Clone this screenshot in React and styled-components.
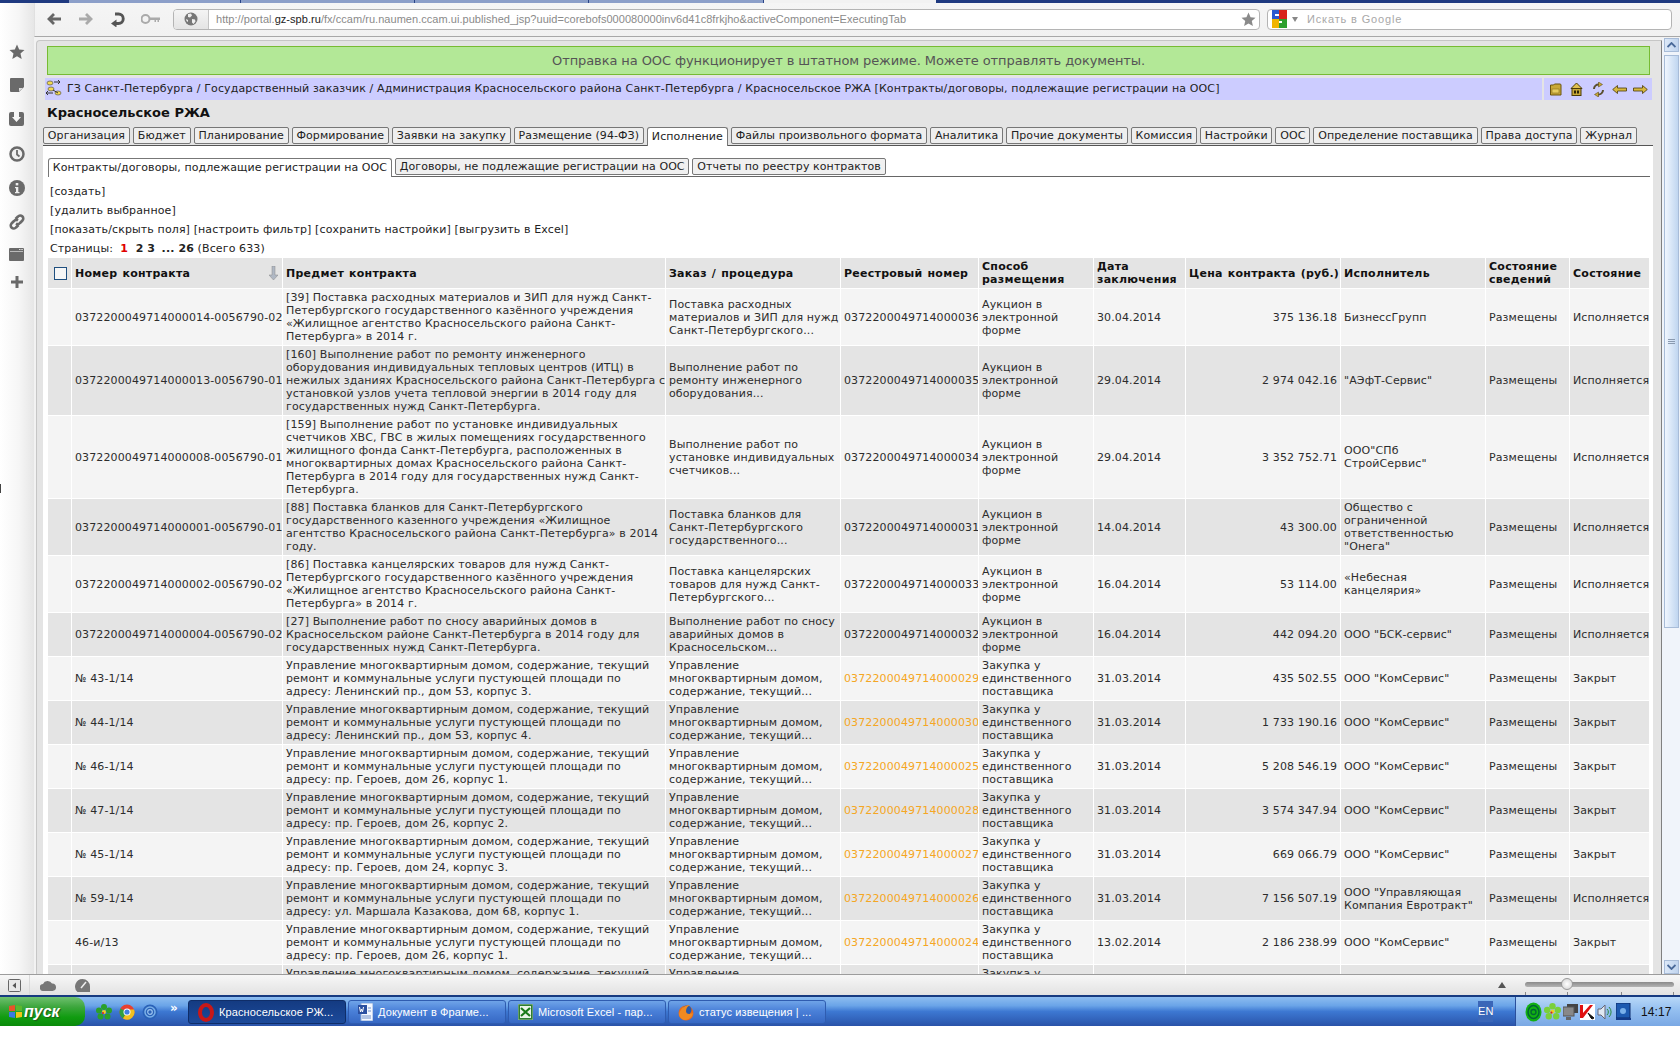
import React from "react";
import styled, { createGlobalStyle } from "styled-components";

const Global = createGlobalStyle`
  html, body { margin: 0; padding: 0; background: #fff; overflow: hidden; }
  body { font-family: "DejaVu Sans", Verdana, sans-serif; font-size: 11px; color: #222; letter-spacing: 0.12px; }
  * { box-sizing: border-box; }
`;

const Screen = styled.div`
  width: 1680px; height: 1026px; display: flex; flex-direction: column; position: relative; overflow: hidden;
`;
const TabStrip = styled.div`display: flex; height: 3px; flex: none; background: #f2f2f2;`;
const StripSeg = styled.div`
  width: ${p => p.$w}px; flex: ${p => (p.$grow ? 1 : "none")};
  background: ${p => p.$c}; border-right: ${p => (p.$sep ? "1px solid #2a4488" : "none")};
`;
const Middle = styled.div`display: flex; flex: 1; min-height: 0;`;
const Sidebar = styled.div`
  width: 34px; flex: none; display: flex; flex-direction: column; align-items: center; padding-top: 40px; padding-right: 1px;
  background: linear-gradient(90deg, #ffffff 0%, #f6f6f6 55%, #e6e6e6 100%);
  position: relative;
`;
const SideMark = styled.div`position: absolute; left: 0; top: 481px; width: 1px; height: 9px; background: #444;`;
const SideIcon = styled.div`height: ${p => p.$h || 34}px; width: 20px; display: flex; justify-content: center; padding-top: 1px; color: #6a6a6a;`;
const Main = styled.div`flex: 1; min-width: 0; display: flex; flex-direction: column;`;
const Toolbar = styled.div`
  height: 34px; flex: none; display: flex; align-items: center; padding: 0 8px 1px 3px;
  background: linear-gradient(#f5f5f5, #f1f1f1); border-bottom: 1px solid #a8a8a8; border-left: 1px solid #e0e0e0;
`;
const NavBtn = styled.div`width: 32px; height: 20px; display: flex; align-items: center; justify-content: center; flex: none;`;
const AddressBar = styled.div`
  flex: 1; min-width: 0; height: 21px; margin-left: 7px; display: flex; align-items: center; background: #fff;
  border: 1px solid #b4b4b4; border-radius: 4px; overflow: hidden;
`;
const Globe = styled.div`
  width: 35px; flex: none; height: 100%; display: flex; align-items: center; justify-content: center;
  background: linear-gradient(#f4f4f4, #e4e4e4); border-right: 1px solid #c4c4c4;
`;
const Url = styled.div`
  flex: 1; padding-left: 7px; font: 11px "Liberation Sans", Arial, sans-serif; letter-spacing: 0.04px; color: #8a8a8a; white-space: nowrap; overflow: hidden;
  b { font-weight: normal; color: #222; }
`;
const StarBox = styled.div`width: 22px; flex: none; display: flex; justify-content: center;`;
const SearchBar = styled.div`
  width: 405px; flex: none; height: 21px; margin-left: 7px; display: flex; align-items: center; gap: 5px; padding-left: 4px; background: #fff;
  border: 1px solid #b4b4b4; border-radius: 4px;
`;
const Caret = styled.div`width: 0; height: 0; border: 3.5px solid transparent; border-top: 5px solid #888; border-bottom: 0;`;
const Placeholder = styled.div`font: 11px "Liberation Sans", Arial, sans-serif; letter-spacing: 0.85px; color: #a8a8a8; margin-left: 4px;`;
const Content = styled.div`flex: 1; min-height: 0; display: flex; padding: 3px 0 0 2px; background: #f2f2f2;`;
const Frame = styled.div`
  flex: 1; min-width: 0; overflow: hidden; background: #e4e4e4; padding-top: 5px;
  border: 1px solid #c6c6c6; border-right-color: #808080; border-bottom: 0; border-top-left-radius: 4px;
`;
const Banner = styled.div`
  height: 29px; margin: 0 11px 3px 10px; display: flex; align-items: center; justify-content: center;
  background: #b3e897; border: 1px solid #77bb33; color: #555; font-size: 13px; letter-spacing: -0.09px;
`;
const Crumbs = styled.div`height: 22px; margin: 0 9px 0 8px; display: flex; gap: 2px;`;
const CrumbText = styled.div`
  flex: 1; background: #ccccff; display: flex; align-items: center; gap: 4px; font-size: 11px; color: #222; white-space: nowrap; padding-bottom: 2px;
`;
const CrumbTools = styled.div`width: 108px; flex: none; background: #ccccff; display: flex; align-items: center; justify-content: space-between; padding: 0 4px 0 4px;`;
const Title = styled.div`height: 27px; line-height: 26px; margin-left: 10px; font-size: 13px; font-weight: bold; color: #111; letter-spacing: 0;`;
const TabRow = styled.div`height: 18px; margin-left: 6px; display: flex; gap: 3px; align-items: flex-start; position: relative; z-index: 1;`;
const Tab = styled.div`
  height: ${p => (p.$active ? 19 : 17)}px; padding: 0 3.85px; line-height: ${p => (p.$active ? 18 : 15)}px; white-space: nowrap; font-size: 11px; color: #222; letter-spacing: 0.08px;
  border: 1px solid #777; border-bottom: ${p => (p.$active ? "0" : "1px solid #777")}; background: ${p => (p.$active ? "#fff" : "#eeeeee")};
  border-radius: ${p => (p.$active ? "3px 3px 0 0" : "2px")};
`;
const Panel = styled.div`margin: 0 8px 0 6px; background: #fff; border-top: 1px solid #555; padding: 12px 3px 0 5px; height: 900px;`;
const SubRow = styled.div`height: 19px; display: flex; gap: 3px; align-items: flex-start; border-bottom: 1px solid #666;`;
const SubTab = styled(Tab)`
  height: ${p => (p.$active ? 19 : 17)}px; background: ${p => (p.$active ? "#fff" : "#f0f0f0")};
`;
const Links = styled.div`padding-top: 5px;`;
const LinkLine = styled.div`height: 19px; line-height: 19px; padding-left: 2px; color: #222; white-space: nowrap;`;
const Pager = styled.b`color: ${p => p.$c || "#222"}; margin-right: ${p => p.$m || 0}px;`;

const Table = styled.table`width: 1602px; table-layout: fixed; border-collapse: separate; border-spacing: 0;`;
const Th = styled.th`
  height: 31px; background: #e4e4e4; border-right: 1px solid #fff; border-bottom: 1px solid #fff; text-align: left; font-size: 11px; line-height: 13px; padding: 1px 3px; color: #111; position: relative;
  letter-spacing: 0.25px; word-spacing: 1px; white-space: nowrap;
`;
const Row = styled.tr`background: ${p => (p.$even ? "#e4e4e4" : "#f4f4f4")};`;
const Td = styled.td`
  border-right: 1px solid #fff; border-bottom: 1px solid #fff; padding: 2px 3px; line-height: 13px; vertical-align: middle; white-space: nowrap; overflow: hidden;
  text-align: ${p => (p.$right ? "right" : "left")};
  color: ${p => p.$c || "#2c2c2c"};
`;
const Check = styled.span`display: block; width: 13px; height: 13px; margin-left: 3px; background: #f6f6f6; border: 1px solid #1f4f7f;`;
const SortArrow = styled.span`position: absolute; right: 4px; top: 8px; color: #999; display: flex;`;

const Scrollbar = styled.div`width: 18px; flex: none; display: flex; flex-direction: column; margin-top: -2px; padding: 0 1px 0 2px; background: #f0f4fa;`;
const ScrollBtn = styled.div`
  height: 14px; flex: none; display: flex; align-items: center; justify-content: center; color: #4a6a9a;
  background: linear-gradient(90deg, #dce8f8, #c0d4ee); border: 1px solid #a8bcd8; font-size: 9px;
`;
const Thumb = styled.div`
  height: 573px; flex: none; margin-top: 3px; display: flex; align-items: center; justify-content: center;
  background: linear-gradient(90deg, #f0f6fe, #c0d6f0); border: 1px solid #a8bcd8;
`;
const Grip = styled.div`width: 7px; height: 5px; border-top: 1px solid #8a9ab0; border-bottom: 1px solid #8a9ab0; position: relative; &:after { content: ""; position: absolute; left: 0; right: 0; top: 1px; height: 1px; background: #8a9ab0; }`;
const ScrollGap = styled.div`flex: 1;`;

const BottomBar = styled.div`
  height: 21px; flex: none; display: flex; align-items: center; padding-left: 0; border-top: 1px solid #9c9c9c;
  background: linear-gradient(#f7f7f7, #e2e2e2); border-bottom: 0; color: #666;
`;
const BarBtn = styled.div`width: ${p => p.$w}px; flex: none; height: 100%; display: flex; align-items: center; justify-content: center; border-right: ${p => (p.$sep ? "1px solid #dadada" : "0")};`;
const BarSpacer = styled.div`flex: 1;`;
const Tri = styled.div`width: 0; height: 0; border: 4px solid transparent; border-bottom: 6px solid #555; border-top: 0; margin-right: 19px;`;
const Slider = styled.div`width: 149px; height: 21px; margin-right: 6px; position: relative; flex: none;`;
const SliderTrack = styled.div`position: absolute; left: 0; right: 0; top: 7px; height: 5px; border-radius: 3px; background: linear-gradient(#8a8a8a, #b4b4b4);`;
const Knob = styled.div`position: absolute; left: 36px; top: 3px; width: 12px; height: 12px; border-radius: 50%; background: radial-gradient(#fff, #d0d0d0); border: 1px solid #999;`;
const Tick = styled.div`position: absolute; left: ${p => p.$x}px; bottom: 1px; width: 1px; height: 3px; background: #888;`;

const Taskbar = styled.div`
  height: 31px; flex: none; display: flex; align-items: stretch; border-top: 2px solid #163a80;
  background: linear-gradient(#8dbdf0 0%, #6aa4e8 30%, #3d78d2 50%, #2f5fb6 85%, #2a52a8 100%);
`;
const Start = styled.div`
  width: 85px; flex: none; display: flex; align-items: center; gap: 1px; padding-left: 8px;
  background: linear-gradient(#6fc06f 0%, #3ca63c 35%, #109c10 70%, #0a8a0a 100%); border-radius: 0 10px 10px 0;
  color: #fff; font: italic bold 16px "Liberation Sans", Arial, sans-serif; letter-spacing: 0; text-shadow: 1px 1px 1px #1a5a1a;
`;
const Quick = styled.div`width: 103px; flex: none; display: flex; align-items: center; padding-left: 11px; gap: 7px; color: #fff; font-size: 11px;`;
const QuickMore = styled.span`margin: -8px 0 0 5px; font-weight: bold; font-size: 12px;`;
const Buttons = styled.div`display: flex; gap: 2px; align-items: center;`;
const TaskBtn = styled.div`
  width: 158px; height: 24px; display: flex; align-items: center; gap: 5px; padding-left: 9px; margin-top: 1px; border-radius: 3px;
  color: #fff; font: 11px "Liberation Sans", Arial, sans-serif; letter-spacing: 0.12px; white-space: nowrap;
  background: ${p => (p.$active ? "linear-gradient(#143b82, #1c4a9a)" : "linear-gradient(#6fa4e8, #4a80d8 45%, #3668c4)")};
  border: 1px solid ${p => (p.$active ? "#0f2d68" : "#2f5cb0")};
`;
const TaskSpacer = styled.div`flex: 1;`;
const Lang = styled.div`width: 15px; height: 21px; align-self: center; margin-right: 22px; background: #3a66b8; color: #fff; font: 11px "Liberation Sans", Arial, sans-serif; text-align: center; line-height: 21px;`;
const Tray = styled.div`
  width: 165px; flex: none; display: flex; align-items: center; gap: 2px; padding-left: 9px; color: #111; border-left: 1px solid #2a4f9c;
  background: linear-gradient(#b8d8f8, #94bff0 45%, #7aa8e4);
`;
const Clock = styled.div`margin-left: 8px; font: 12px "Liberation Sans", Arial, sans-serif; color: #111;`;
const Blank = styled.div`height: 24px; background: #fff;`;

/* icons */
const StarIcon = ({ s = 16, c = "#6a6a6a" }) => <svg width={s} height={s} viewBox="0 0 16 16"><path fill={c} d="M8 .5l2.2 5 5.3.5-4 3.6 1.2 5.4L8 12.2 3.3 15l1.2-5.4-4-3.6 5.3-.5z" /></svg>;
const NoteIcon = () => <svg width="15" height="14" viewBox="0 0 15 14"><path fill="#6a6a6a" d="M2 0h12a1 1 0 011 1v8l-5 5H2a1 1 0 01-1-1V1a1 1 0 011-1z" /><path fill="#ddd" d="M10 10h4l-4 3.5z" /></svg>;
const SaveIcon = () => <svg width="15" height="14" viewBox="0 0 15 14"><path fill="#6a6a6a" d="M2 0h3v5H3l4.500 5L12 5h-2V0h3a2 2 0 012 2v10a2 2 0 01-2 2H2a2 2 0 01-2-2V2a2 2 0 012-2z" /></svg>;
const ClockIcon = () => <svg width="16" height="16" viewBox="0 0 16 16"><circle cx="8" cy="8" r="6.500" fill="#f0f0f0" stroke="#6a6a6a" strokeWidth="2.500" /><path d="M8 4v4.500l2.500 2" fill="none" stroke="#6a6a6a" strokeWidth="1.800" /></svg>;
const InfoIcon = () => <svg width="16" height="16" viewBox="0 0 16 16"><circle cx="8" cy="8" r="8" fill="#6a6a6a" /><rect x="6.700" y="3" width="2.600" height="2.400" fill="#eee" /><path d="M6 7h3.300v5H10.500v1.200H6V12h1V8.200H6z" fill="#eee" /></svg>;
const LinkIcon = () => <svg width="16" height="16" viewBox="0 0 16 16" fill="none" stroke="#6a6a6a" strokeWidth="2.600"><path d="M6.500 5l2.500-2.500a3 3 0 014.500 4L11 9a3 3 0 01-4 .5" /><path d="M9.500 11L7 13.500a3 3 0 01-4.500-4L5 7a3 3 0 014-.5" /></svg>;
const WinIcon = () => <svg width="15" height="13" viewBox="0 0 15 13"><rect width="15" height="13" rx="1" fill="#6a6a6a" /><rect x="1" y="3" width="13" height=".7" fill="#ddd" /><rect x="10" y="1" width="1.500" height="1" fill="#ddd" /><rect x="12.300" y="1" width="1.500" height="1" fill="#ddd" /></svg>;
const PlusIcon = () => <svg width="12" height="12" viewBox="0 0 12 12"><path fill="#6a6a6a" d="M4.500 0h3v4.500H12v3H7.500V12h-3V7.500H0v-3h4.500z" /></svg>;
const NavArrow = ({ c, flip }) => <svg width="14" height="14" viewBox="0 0 14 14" style={flip ? { transform: "scaleX(-1)" } : undefined}><path d="M7 2L2 7l5 5M2.500 7H14" fill="none" stroke={c} strokeWidth="2.800" /></svg>;
const Reload = () => <svg width="15" height="16" viewBox="0 0 15 16" fill="none"><path d="M4 3h3.500a4.500 4.500 0 110 9.500H4" stroke="#555" strokeWidth="2.900" /><path d="M5.500 8.500v8L0 12.500z" fill="#555" /></svg>;
const Key = () => <svg width="19" height="10" viewBox="0 0 19 10"><circle cx="4.500" cy="5" r="4" fill="none" stroke="#aaa" strokeWidth="2" /><path fill="#aaa" d="M8 3.500h11v2.500h-1v2h-1.500V6H15v2h-1.500V6H8z" /></svg>;
const GlobeIcon = () => <svg width="14" height="14" viewBox="0 0 14 14"><circle cx="7" cy="7" r="6.500" fill="#777" /><path fill="#eee" d="M4 2l3-.5 1 2-2 2-2-.5zM8 7l3 .5 .5 2-2 2.500-1.500-1.500zM2 7l2 1v2L2.500 9z" /></svg>;
const GoogleG = () => <svg width="15" height="18" viewBox="0 0 15 18"><rect width="7" height="9" fill="#2a5ad0" /><rect x="7" width="8" height="9" fill="#d8241c" /><rect y="9" width="7" height="9" fill="#f0b400" /><rect x="7" y="9" width="8" height="9" fill="#2ea02e" /><path fill="#fff" d="M3 4h4v2H3zM7 11h3v2H7z" /></svg>;

const Gold = ({ children }) => <svg width="15" height="15" viewBox="0 0 15 15">{children}</svg>;
const FolderG = () => <Gold><path fill="#c8a838" stroke="#6a5410" d="M2.500 3h3l1-1h5.500a1 1 0 011 1v10h-10.500z" /><rect x="4" y="7" width="7" height="4" fill="#e6cc60" stroke="#8a7020" strokeWidth=".6" /></Gold>;
const HomeG = () => <Gold><path fill="#e0c050" stroke="#4a3a08" d="M7.500 1L13 6.500H2z" /><rect x="3" y="6.500" width="9" height="7" fill="#c8a838" stroke="#4a3a08" /><rect x="5" y="8.500" width="2" height="3" fill="#2a2208" /><rect x="8" y="8.500" width="2" height="3" fill="#2a2208" /></Gold>;
const SyncG = () => <Gold><path fill="none" stroke="#5a5030" strokeWidth="2" d="M3 7A4.500 4.500 0 018 2.500M12 8A4.500 4.500 0 017 12.500" /><path fill="#c8a838" stroke="#4a3a08" strokeWidth=".5" d="M7.500 0l4 2.500-4 2.500zM7.500 10l-4 2.500 4 2.500z" /></Gold>;
const ArrowG = ({ flip }) => <svg width="15" height="9" viewBox="0 0 15 9" style={flip ? { transform: "scaleX(-1)" } : undefined}><path d="M5.500 .5L.7 4.500l4.800 4V6H14.500V3H5.500z" fill="#d8b840" stroke="#4a3a08" strokeWidth=".8" /></svg>;
const TreeG = () => <svg width="18" height="18" viewBox="0 0 18 18"><ellipse cx="5" cy="4" rx="3" ry="2" fill="#f0d850" stroke="#555" strokeWidth=".7" /><ellipse cx="6" cy="10" rx="3" ry="2" fill="#f0d850" stroke="#555" strokeWidth=".7" /><ellipse cx="13" cy="14" rx="3" ry="2" fill="#f0d850" stroke="#555" strokeWidth=".7" /><path stroke="#333" fill="none" d="M9 3h6M13 1l2 2-2 2M8 11l5 3M1 14h7M3 12l-2 2 2 2" /></svg>;

const Clover = ({ s = 16, c = "#22a022" }) => <svg width={s} height={s} viewBox="0 0 16 16"><g fill={c}><circle cx="8" cy="3" r="3" /><circle cx="3" cy="6.500" r="3" /><circle cx="13" cy="6.500" r="3" /><circle cx="4.500" cy="12.500" r="3" /><circle cx="11.500" cy="12.500" r="3" /></g><circle cx="8" cy="8" r="2" fill="#f0d020" /><circle cx="7" cy="9" r="1" fill="#d02020" /></svg>;
const Chrome = () => <svg width="16" height="16" viewBox="0 0 16 16"><circle cx="8" cy="8" r="7.500" fill="#e84030" /><path d="M8 8L1.500 4.500A7.500 7.500 0 004 14.500z" fill="#30a040" /><path d="M8 8l-4 6.500A7.500 7.500 0 0015 5.500H8z" fill="#f0c020" /><circle cx="8" cy="8" r="3.500" fill="#fff" /><circle cx="8" cy="8" r="2.600" fill="#4080e0" /></svg>;
const Ie = () => <svg width="16" height="18" viewBox="0 0 16 18"><circle cx="8" cy="9" r="7.500" fill="#2a62b8" /><circle cx="8" cy="9" r="5" fill="none" stroke="#7ab0e8" strokeWidth="1.500" /><circle cx="8" cy="9" r="2.300" fill="none" stroke="#9cc4f0" strokeWidth="1.200" /></svg>;
const Opera = () => <svg width="16" height="19" viewBox="0 0 16 19"><ellipse cx="8" cy="9.500" rx="6" ry="7.500" fill="none" stroke="#c81818" strokeWidth="4" /></svg>;
const Word = () => <svg width="15" height="18" viewBox="0 0 15 18"><rect x="3" y="0" width="12" height="18" fill="#f4f8ff" stroke="#8aa8d8" /><rect x="0" y="2" width="9" height="9" fill="#2a4fa0" /><path d="M1.500 4l1 5 1-3 1 3 1-5" stroke="#fff" fill="none" /><path d="M10 5h3M10 8h3M4 13h9M4 15h9" stroke="#7090c8" /></svg>;
const Excel = () => <svg width="15" height="16" viewBox="0 0 15 16"><rect width="15" height="16" fill="#2e7d32" stroke="#9cc09c" /><rect x="2" y="2" width="11" height="12" fill="#eaf4ea" /><path d="M3 4l9 8M12 4l-9 8" stroke="#1a7a1a" strokeWidth="2.200" /></svg>;
const Firefox = () => <svg width="16" height="18" viewBox="0 0 16 18"><circle cx="8" cy="10" r="7.500" fill="#e86a1a" /><circle cx="9" cy="7" r="4.500" fill="#2a5aa8" /><path d="M1 11c2-7 7-9 11-9-2 1-4 3-4 6s3 4 7 2c-1 5-5 7-8 7-3 0-6-3-6-6z" fill="#f08a20" /></svg>;
const Agent = () => <svg width="17" height="20" viewBox="0 0 17 20"><ellipse cx="8.500" cy="10" rx="8" ry="9.500" fill="#12b012" /><ellipse cx="8.500" cy="10" rx="5.500" ry="6.500" fill="none" stroke="#063" strokeWidth="1.500" /><circle cx="8.500" cy="10" r="2.500" fill="none" stroke="#063" strokeWidth="1.300" /></svg>;
const Net = () => <svg width="15" height="18" viewBox="0 0 15 18"><rect x="4" y="1" width="11" height="9" fill="#444" /><rect x="0" y="4" width="11" height="9" fill="#888" stroke="#555" /><rect x="3" y="14" width="5" height="3" fill="#666" /></svg>;
const Kasper = () => <svg width="15" height="16" viewBox="0 0 15 16"><rect width="15" height="16" fill="#fff" /><path d="M0 1h3v8l7-8h3L3 14H0z" fill="#e01010" /><path d="M8 9l6 5-2 1-1-1z" fill="#111" stroke="#111" /></svg>;
const Sound = () => <svg width="17" height="18" viewBox="0 0 17 18"><path d="M1 6h3l4-4v14l-4-4H1z" fill="#dfe8f2" stroke="#667" /><path d="M10 6a4 4 0 010 6M12 4a7 7 0 010 10" fill="none" stroke="#2e8a3e" /></svg>;
const Disp = () => <svg width="15" height="17" viewBox="0 0 15 17"><rect x="0" y="0" width="14" height="15" fill="#1d5ab0" stroke="#0d2a6a" /><rect x="0" y="15" width="15" height="2" fill="#123a88" /><circle cx="7" cy="8" r="3" fill="#79b0ea" /></svg>;
const Panelish = () => <svg width="13" height="13" viewBox="0 0 13 13"><rect x=".5" y=".5" width="12" height="12" rx="1" fill="#e8e8e8" stroke="#666" /><path d="M8 3.500v6L4.500 6.500z" fill="#555" /></svg>;
const Cloud = () => <svg width="16" height="11" viewBox="0 0 16 11"><path fill="#777" d="M3.500 11a3.500 3.500 0 01-.5-7A5 5 0 0112 3.500 3.500 3.500 0 0112.500 11z" /></svg>;
const Gauge = () => <svg width="15" height="13" viewBox="0 0 15 13"><path fill="#777" d="M7.500 0a7.500 7.500 0 017.500 7.500V13H2.500A7.500 7.500 0 017.500 0z" /><path d="M6 9l5-6" stroke="#eee" strokeWidth="1.500" /></svg>;
const SortIcon = () => <svg width="9" height="14" viewBox="0 0 9 14"><path d="M3 0h3v9h3l-4.500 5L0 9h3z" fill="#b0b8c4" stroke="#888" strokeWidth=".5" /></svg>;
const Chev = ({ up }) => <svg width="9" height="6" viewBox="0 0 9 6"><path d={up ? "M.5 5L4.500 1l4 4" : "M.5 1l4 4 4-4"} fill="none" stroke="#4a6a9a" strokeWidth="1.800" /></svg>;

const Lines = ({ t }) => t.split("|").map((l, i) => <React.Fragment key={i}>{i > 0 && <br />}{l}</React.Fragment>);

const AUC = "Аукцион в|электронной|форме";
const ONE = "Закупка у|единственного|поставщика";
const MGMT = "Управление|многоквартирным домом,|содержание, текущий...";
const mgmt = a => `Управление многоквартирным домом, содержание, текущий|ремонт и коммунальные услуги пустующей площади по|адресу: ${a}`;

const rows = [
  ["0372200049714000014-0056790-02", "[39] Поставка расходных материалов и ЗИП для нужд Санкт-|Петербургского государственного казённого учреждения|«Жилищное агентство Красносельского района Санкт-|Петербурга» в 2014 г.", "Поставка расходных|материалов и ЗИП для нужд|Санкт-Петербургского...", "0372200049714000036", AUC, "30.04.2014", "375 136.18", "БизнессГрупп", "Исполняется"],
  ["0372200049714000013-0056790-01", "[160] Выполнение работ по ремонту инженерного|оборудования индивидуальных тепловых центров (ИТЦ) в|нежилых зданиях Красносельского района Санкт-Петербурга с|установкой узлов учета тепловой энергии в 2014 году для|государственных нужд Санкт-Петербурга.", "Выполнение работ по|ремонту инженерного|оборудования...", "0372200049714000035", AUC, "29.04.2014", "2 974 042.16", "\"АЭфТ-Сервис\"", "Исполняется"],
  ["0372200049714000008-0056790-01", "[159] Выполнение работ по установке индивидуальных|счетчиков ХВС, ГВС в жилых помещениях государственного|жилищного фонда Санкт-Петербурга, расположенных в|многоквартирных домах Красносельского района Санкт-|Петербурга в 2014 году для государственных нужд Санкт-|Петербурга.", "Выполнение работ по|установке индивидуальных|счетчиков...", "0372200049714000034", AUC, "29.04.2014", "3 352 752.71", "ООО\"СПб|СтройСервис\"", "Исполняется"],
  ["0372200049714000001-0056790-01", "[88] Поставка бланков для Санкт-Петербургского|государственного казенного учреждения «Жилищное|агентство Красносельского района Санкт-Петербурга» в 2014|году.", "Поставка бланков для|Санкт-Петербургского|государственного...", "0372200049714000031", AUC, "14.04.2014", "43 300.00", "Общество с|ограниченной|ответственностью|\"Онега\"", "Исполняется"],
  ["0372200049714000002-0056790-02", "[86] Поставка канцелярских товаров для нужд Санкт-|Петербургского государственного казённого учреждения|«Жилищное агентство Красносельского района Санкт-|Петербурга» в 2014 г.", "Поставка канцелярских|товаров для нужд Санкт-|Петербургского...", "0372200049714000033", AUC, "16.04.2014", "53 114.00", "«Небесная|канцелярия»", "Исполняется"],
  ["0372200049714000004-0056790-02", "[27] Выполнение работ по сносу аварийных домов в|Красносельском районе Санкт-Петербурга в 2014 году для|государственных нужд Санкт-Петербурга.", "Выполнение работ по сносу|аварийных домов в|Красносельском...", "0372200049714000032", AUC, "16.04.2014", "442 094.20", "ООО \"БСК-сервис\"", "Исполняется"],
  ["№ 43-1/14", mgmt("Ленинский пр., дом 53, корпус 3."), MGMT, "0372200049714000029", ONE, "31.03.2014", "435 502.55", "ООО \"КомСервис\"", "Закрыт", 1],
  ["№ 44-1/14", mgmt("Ленинский пр., дом 53, корпус 4."), MGMT, "0372200049714000030", ONE, "31.03.2014", "1 733 190.16", "ООО \"КомСервис\"", "Закрыт", 1],
  ["№ 46-1/14", mgmt("пр. Героев, дом 26, корпус 1."), MGMT, "0372200049714000025", ONE, "31.03.2014", "5 208 546.19", "ООО \"КомСервис\"", "Закрыт", 1],
  ["№ 47-1/14", mgmt("пр. Героев, дом 26, корпус 2."), MGMT, "0372200049714000028", ONE, "31.03.2014", "3 574 347.94", "ООО \"КомСервис\"", "Закрыт", 1],
  ["№ 45-1/14", mgmt("пр. Героев, дом 24, корпус 3."), MGMT, "0372200049714000027", ONE, "31.03.2014", "669 066.79", "ООО \"КомСервис\"", "Закрыт", 1],
  ["№ 59-1/14", mgmt("ул. Маршала Казакова, дом 68, корпус 1."), MGMT, "0372200049714000026", ONE, "31.03.2014", "7 156 507.19", "ООО \"Управляющая|Компания Евротракт\"", "Исполняется", 1],
  ["46-и/13", mgmt("пр. Героев, дом 26, корпус 1."), MGMT, "0372200049714000024", ONE, "13.02.2014", "2 186 238.99", "ООО \"КомСервис\"", "Закрыт", 1],
];

const cols = [24, 211, 383, 175, 138, 115, 92, 155, 145, 84, 80];
const tabs = ["Организация", "Бюджет", "Планирование", "Формирование", "Заявки на закупку", "Размещение (94-ФЗ)", "Исполнение", "Файлы произвольного формата", "Аналитика", "Прочие документы", "Комиссия", "Настройки", "ООС", "Определение поставщика", "Права доступа", "Журнал"];
const segs = [[69, "#1f3a80"], [172, "#8c9fc9", 1], [174, "#8c9fc9", 1], [174, "#8c9fc9", 1], [175, "#8c9fc9", 1], [172, "#f2f2f2"]];

export default function App() {
  return (
    <>
      <Global />
      <Screen>
        <TabStrip>
          {segs.map(([w, c, sep], i) => <StripSeg key={i} $w={w} $c={c} $sep={sep} />)}
          <StripSeg $grow $c="#1f3a80" />
        </TabStrip>
        <Middle>
          <Sidebar>
            <SideMark />
            <SideIcon><StarIcon /></SideIcon>
            <SideIcon><NoteIcon /></SideIcon>
            <SideIcon><SaveIcon /></SideIcon>
            <SideIcon><ClockIcon /></SideIcon>
            <SideIcon><InfoIcon /></SideIcon>
            <SideIcon><LinkIcon /></SideIcon>
            <SideIcon $h={28}><WinIcon /></SideIcon>
            <SideIcon><PlusIcon /></SideIcon>
          </Sidebar>
          <Main>
            <Toolbar>
              <NavBtn><NavArrow c="#666" /></NavBtn>
              <NavBtn><NavArrow c="#aaa" flip /></NavBtn>
              <NavBtn><Reload /></NavBtn>
              <NavBtn><Key /></NavBtn>
              <AddressBar>
                <Globe><GlobeIcon /></Globe>
                <Url>http://portal.<b>gz-spb.ru</b>/fx/ccam/ru.naumen.ccam.ui.published_jsp?uuid=corebofs000080000inv6d41c8frkjho&amp;activeComponent=ExecutingTab</Url>
                <StarBox><StarIcon s={15} c="#8a8a8a" /></StarBox>
              </AddressBar>
              <SearchBar>
                <GoogleG />
                <Caret />
                <Placeholder>Искать в Google</Placeholder>
              </SearchBar>
            </Toolbar>
            <Content>
              <Frame>
                <Banner>Отправка на ООС функционирует в штатном режиме. Можете отправлять документы.</Banner>
                <Crumbs>
                  <CrumbText><TreeG />ГЗ Санкт-Петербурга / Государственный заказчик / Администрация Красносельского района Санкт-Петербурга / Красносельское РЖА [Контракты/договоры, подлежащие регистрации на ООС]</CrumbText>
                  <CrumbTools><FolderG /><HomeG /><SyncG /><ArrowG /><ArrowG flip /></CrumbTools>
                </Crumbs>
                <Title>Красносельское РЖА</Title>
                <TabRow>{tabs.map(t => <Tab key={t} $active={t === "Исполнение"}>{t}</Tab>)}</TabRow>
                <Panel>
                  <SubRow>
                    <SubTab $active>Контракты/договоры, подлежащие регистрации на ООС</SubTab>
                    <SubTab>Договоры, не подлежащие регистрации на ООС</SubTab>
                    <SubTab>Отчеты по реестру контрактов</SubTab>
                  </SubRow>
                  <Links>
                    <LinkLine>[создать]</LinkLine>
                    <LinkLine>[удалить выбранное]</LinkLine>
                    <LinkLine>[показать/скрыть поля] [настроить фильтр] [сохранить настройки] [выгрузить в Excel]</LinkLine>
                    <LinkLine>Страницы:&nbsp; <Pager $c="#e00000" $m={4}>1</Pager> <Pager>2</Pager> <Pager $m={3}>3</Pager> <Pager>... 26</Pager> (Всего 633)</LinkLine>
                  </Links>
                  <Table>
                    <colgroup>{cols.map((w, i) => <col key={i} width={w} />)}</colgroup>
                    <thead>
                      <tr>
                        <Th><Check /></Th>
                        <Th>Номер контракта<SortArrow><SortIcon /></SortArrow></Th>
                        <Th>Предмет контракта</Th>
                        <Th>Заказ / процедура</Th>
                        <Th>Реестровый номер</Th>
                        <Th>Способ<br />размещения</Th>
                        <Th>Дата<br />заключения</Th>
                        <Th>Цена контракта (руб.)</Th>
                        <Th>Исполнитель</Th>
                        <Th>Состояние<br />сведений</Th>
                        <Th>Состояние</Th>
                      </tr>
                    </thead>
                    <tbody>
                      {rows.map((r, i) => (
                        <Row key={i} $even={i % 2 === 1}>
                          <Td />
                          <Td>{r[0]}</Td>
                          <Td><Lines t={r[1]} /></Td>
                          <Td><Lines t={r[2]} /></Td>
                          <Td $c={r[9] ? "#f5a623" : undefined}>{r[3]}</Td>
                          <Td><Lines t={r[4]} /></Td>
                          <Td>{r[5]}</Td>
                          <Td $right>{r[6]}</Td>
                          <Td><Lines t={r[7]} /></Td>
                          <Td>Размещены</Td>
                          <Td>{r[8]}</Td>
                        </Row>
                      ))}
                      <Row $even>
                        <Td /><Td />
                        <Td><Lines t={mgmt("пр. Героев, дом 26, корпус 1.")} /></Td>
                        <Td><Lines t={MGMT} /></Td>
                        <Td />
                        <Td><Lines t={ONE} /></Td>
                        <Td /><Td /><Td /><Td /><Td />
                      </Row>
                    </tbody>
                  </Table>
                </Panel>
              </Frame>
              <Scrollbar>
                <ScrollBtn><Chev up /></ScrollBtn>
                <Thumb><Grip /></Thumb>
                <ScrollGap />
                <ScrollBtn><Chev /></ScrollBtn>
              </Scrollbar>
            </Content>
          </Main>
        </Middle>
        <BottomBar>
          <BarBtn $w={30} $sep><Panelish /></BarBtn>
          <BarBtn $w={36}><Cloud /></BarBtn>
          <BarBtn $w={32}><Gauge /></BarBtn>
          <BarSpacer />
          <Tri />
          <Slider>
            <SliderTrack />
            <Tick $x={0} />
            <Tick $x={42} />
            <Tick $x={96} />
            <Tick $x={148} />
            <Knob />
          </Slider>
        </BottomBar>
        <Taskbar>
          <Start><svg width="15" height="15" viewBox="0 0 15 15"><path fill="#e8542a" d="M1 2l6-1v6H1z" /><path fill="#5cb82e" d="M8 1l6 1v5H8z" /><path fill="#3a7ae0" d="M1 8h6v6l-6-1z" /><path fill="#f2c418" d="M8 8h6v5l-6 1z" /></svg>пуск</Start>
          <Quick><Clover s={16} c="#2aa02a" /><Chrome /><Ie /><QuickMore>»</QuickMore></Quick>
          <Buttons>
            <TaskBtn $active><Opera />Красносельское РЖ...</TaskBtn>
            <TaskBtn><Word />Документ в Фрагме...</TaskBtn>
            <TaskBtn><Excel />Microsoft Excel - пар...</TaskBtn>
            <TaskBtn><Firefox />статус извещения | ...</TaskBtn>
          </Buttons>
          <TaskSpacer />
          <Lang>EN</Lang>
          <Tray><Agent /><Clover s={17} c="#7ad03a" /><Net /><Kasper /><Sound /><Disp /><Clock>14:17</Clock></Tray>
        </Taskbar>
      </Screen>
      <Blank />
    </>
  );
}
